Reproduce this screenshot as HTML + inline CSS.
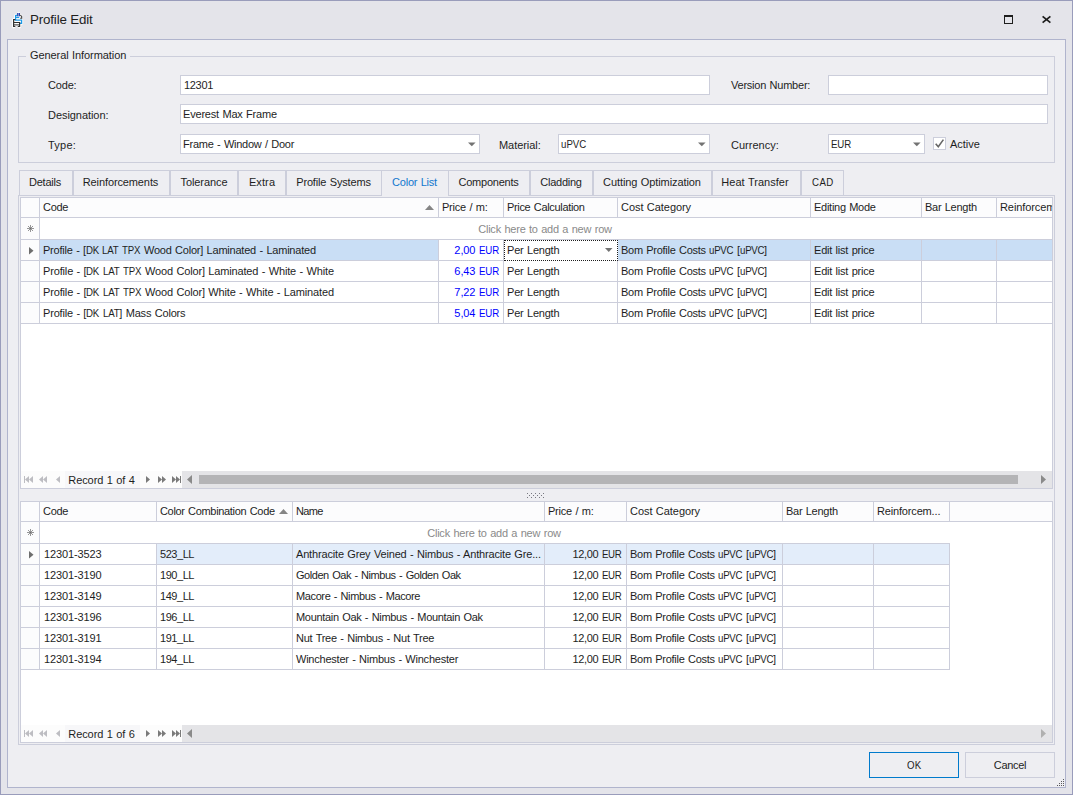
<!DOCTYPE html><html><head><meta charset="utf-8"><title>Profile Edit</title><style>
*{box-sizing:border-box;margin:0;padding:0}
html,body{width:1073px;height:795px;overflow:hidden}
body{background:#E4E4EA;font-family:"Liberation Sans",sans-serif;font-size:11px;color:#1E1E1E;position:relative;line-height:1}
.a{position:absolute;white-space:nowrap}
.k{display:inline-block;transform:scaleX(0.88);transform-origin:0 50%}
#win{left:0;top:0;width:1073px;height:795px;border:1px solid #999CBB}
#client{left:7px;top:39px;width:1059px;height:749px;background:#EEEEF2;border:1px solid #B0B4CD}
#title{left:30px;top:11px;font-size:13.33px;line-height:18px;letter-spacing:-0.15px}
.box{border:1px solid #CCCEDB}
.inp{border:1px solid #CCCEDB;background:#fff;height:20px;line-height:18px;padding-left:2px;overflow:hidden}
.lbl{height:20px;line-height:20px}
.tab{top:170px;height:26px;border:1px solid #CCCEDB;border-bottom:none;line-height:23px;text-align:center;background:#EEEEF2}
.tab.act{color:#1277CE;height:26px}
.grid{background:#fff;border:1px solid #CCCEDB;overflow:hidden}
.hc{top:0;height:20px;background:#FCFCFD;border-right:1px solid #CCCEDB;border-bottom:1px solid #CCCEDB;line-height:19px;padding-left:3px;overflow:hidden}
.c{height:21px;border-right:1px solid #CCCEDB;border-bottom:1px solid #CCCEDB;line-height:20px;padding-left:3px;overflow:hidden;background:#fff}
.r{text-align:right;padding-right:4px;padding-left:0}
.blue{color:#0000FF}
.ind{background:#FCFCFD}
.nav{background:#FCFCFC;height:17px}
.sb{background:#E4E4E7;height:17px}
.btn{top:752px;height:26px;line-height:24px;text-align:center;background:#EEEEF2}
</style></head><body>
<div id="win" class="a"></div>
<svg class="a" style="left:11px;top:11px" width="14" height="18" viewBox="11 11 14 18">
<g fill="none" stroke="#fff" stroke-width="3.2" stroke-linecap="round" stroke-linejoin="round" opacity="0.92">
<path d="M15.6 15.6V20.1H21.6V23.3H20.3"/><path d="M13.6 19.6V26.8M19.6 22.6V26.8M13.6 22.7H19.6M13.6 25H19.6"/><path d="M18.6 13.4V16.4M21 16V18"/>
</g>
<path d="M15.6 15V20.1H21.6V23.3H20M15.6 17.3H19.2M15.6 15.4H17" fill="none" stroke="#1E9BE9" stroke-width="1.25"/>
<path d="M17.75 13V16.3M19.35 13V16.3" stroke="#1733A6" stroke-width="1.15"/>
<path d="M20.3 15.1L21.7 16.5V18.3H20.2" fill="none" stroke="#3A3A3A" stroke-width="1.05"/>
<path d="M15.3 19.6H13.6V26.5H15.3M19.6 22V26.5H17.8" fill="none" stroke="#333" stroke-width="1.2"/><path d="M13.6 22.5H19.6M13.6 24.9H19.6" fill="none" stroke="#2E2E2E" stroke-width="1"/>
</svg>
<div id="title" class="a">Profile Edit</div>
<div class="a" style="left:1004px;top:15px;width:9px;height:9px;border:1px solid #1E1E1E;border-top-width:2px"></div>
<svg class="a" style="left:1041px;top:15px" width="11" height="9" viewBox="0 0 11 9"><path d="M1.6 1.3L9.4 7.7M9.4 1.3L1.6 7.7" stroke="#1E1E1E" stroke-width="1.7" fill="none"/></svg>
<div id="client" class="a"></div>
<div class="a box" style="left:18px;top:56px;width:1037px;height:107px"></div>
<div class="a" style="left:26px;top:47px;height:16px;line-height:16px;padding:0 4px;background:#EEEEF2"><span style="letter-spacing:-0.075px;word-spacing:0.475px">General Information</span></div>
<div class="a lbl" style="left:48px;top:75px"><span style="letter-spacing:-0.169px">Code:</span></div>
<div class="a inp" style="left:180px;top:75px;width:530px;padding-left:3px"><span style="letter-spacing:-0.310px">12301</span></div>
<div class="a lbl" style="left:731px;top:75px"><span style="letter-spacing:-0.225px;word-spacing:0.625px">Version Number:</span></div>
<div class="a inp" style="left:828px;top:75px;width:220px;padding-left:2px"></div>
<div class="a lbl" style="left:48px;top:105px"><span style="letter-spacing:-0.057px">Designation:</span></div>
<div class="a inp" style="left:180px;top:104px;width:868px;padding-left:2px"><span style="letter-spacing:-0.191px;word-spacing:0.591px">Everest Max Frame</span></div>
<div class="a lbl" style="left:48px;top:135px"><span style="letter-spacing:0.243px">Type:</span></div>
<div class="a inp" style="left:180px;top:134px;width:300px;padding-left:2px"><span style="letter-spacing:-0.243px;word-spacing:0.643px">Frame - Window / Door</span></div>
<svg class="a" style="left:468px;top:142px" width="8" height="5" viewBox="0 0 8 5"><path d="M0 0.5H7.6L3.8 4.3Z" fill="#737373"/></svg>
<div class="a lbl" style="left:499px;top:135px"><span style="letter-spacing:-0.057px">Material:</span></div>
<div class="a inp" style="left:558px;top:134px;width:152px;padding-left:2px"><span style="letter-spacing:-0.004px"><span class="k" style="margin-right:-3.45px">uPVC</span></span></div>
<svg class="a" style="left:698px;top:142px" width="8" height="5" viewBox="0 0 8 5"><path d="M0 0.5H7.6L3.8 4.3Z" fill="#737373"/></svg>
<div class="a lbl" style="left:731px;top:135px"><span style="letter-spacing:0.001px">Currency:</span></div>
<div class="a inp" style="left:828px;top:134px;width:97px;padding-left:2px"><span style="letter-spacing:-0.181px"><span class="k" style="margin-right:-2.79px">EUR</span></span></div>
<svg class="a" style="left:913px;top:142px" width="8" height="5" viewBox="0 0 8 5"><path d="M0 0.5H7.6L3.8 4.3Z" fill="#737373"/></svg>
<div class="a" style="left:933px;top:137px;width:13px;height:13px;border:1px solid #CCCEDB;background:#fff"></div>
<svg class="a" style="left:933px;top:137px" width="13" height="13" viewBox="0 0 13 13"><path d="M2.7 6.7L5.3 9.7L10.4 2.6" fill="none" stroke="#666" stroke-width="1.6"/></svg>
<div class="a lbl" style="left:950px;top:134px"><span style="letter-spacing:-0.031px">Active</span></div>
<div class="a box" style="left:18px;top:195px;width:1037px;height:550px"></div>
<div class="a tab" style="left:19px;width:54px;padding-right:2px"><span style="letter-spacing:-0.219px">Details</span></div>
<div class="a tab" style="left:73px;width:97px;padding-right:2px"><span style="letter-spacing:-0.115px">Reinforcements</span></div>
<div class="a tab" style="left:170px;width:68px"><span style="letter-spacing:-0.071px">Tolerance</span></div>
<div class="a tab" style="left:238px;width:48px"><span style="letter-spacing:0.114px">Extra</span></div>
<div class="a tab" style="left:286px;width:96px;padding-right:1px"><span style="letter-spacing:-0.165px;word-spacing:0.565px">Profile Systems</span></div>
<div class="a tab act" style="left:382px;width:66px;border-left:none;border-right:none;padding-right:1px"><span style="letter-spacing:-0.220px;word-spacing:0.620px">Color List</span></div>
<div class="a tab" style="left:448px;width:82px;padding-right:1px"><span style="letter-spacing:-0.229px">Components</span></div>
<div class="a tab" style="left:530px;width:63px;padding-right:1px"><span style="letter-spacing:-0.270px">Cladding</span></div>
<div class="a tab" style="left:593px;width:119px;padding-right:1px"><span style="letter-spacing:-0.089px;word-spacing:0.489px">Cutting Optimization</span></div>
<div class="a tab" style="left:712px;width:89px;padding-right:3px"><span style="letter-spacing:0.031px;word-spacing:0.369px">Heat Transfer</span></div>
<div class="a tab" style="left:801px;width:43px"><span style="letter-spacing:0.499px"><span class="k" style="margin-right:-2.79px">CAD</span></span></div>
<div class="a" style="left:19px;top:195px;width:363px;height:1px;background:#CCCEDB"></div>
<div class="a" style="left:382px;top:195px;width:66px;height:1px;background:#EEEEF2"></div>
<div class="a" style="left:448px;top:195px;width:396px;height:1px;background:#CCCEDB"></div>
<div class="a grid" style="left:20px;top:197px;width:1033px;height:292px">
<div class="a hc" style="left:0px;width:19px"></div>
<div class="a hc" style="left:19px;width:399px"><span style="letter-spacing:-0.285px">Code</span></div>
<div class="a hc" style="left:418px;width:65px"><span style="letter-spacing:-0.220px;word-spacing:0.620px">Price / m:</span></div>
<div class="a hc" style="left:483px;width:114px"><span style="letter-spacing:-0.332px;word-spacing:0.732px">Price Calculation</span></div>
<div class="a hc" style="left:597px;width:193px"><span style="letter-spacing:-0.053px;word-spacing:0.453px">Cost Category</span></div>
<div class="a hc" style="left:790px;width:111px"><span style="letter-spacing:-0.268px;word-spacing:0.668px">Editing Mode</span></div>
<div class="a hc" style="left:901px;width:75px"><span style="letter-spacing:-0.274px;word-spacing:0.674px">Bar Length</span></div>
<div class="a hc" style="left:976px;width:64px"><span style="letter-spacing:-0.092px">Reinforcement</span></div>
<svg class="a" style="left:404px;top:7px" width="9" height="5" viewBox="0 0 9 5"><path d="M0 5L4.5 0L9 5Z" fill="#858585"/></svg>
<div class="a c ind" style="left:0;top:20px;width:19px;height:22px;padding:0"></div>
<svg class="a" style="left:6px;top:27px" width="7" height="7" viewBox="0 0 7 7"><path d="M3.5 0V7M0 3.5H7M1 1L6 6M6 1L1 6" stroke="#6A6A6A" stroke-width="0.7" fill="none"/></svg>
<div class="a" style="left:19px;top:20px;width:1012px;height:22px;line-height:23px;text-align:center;padding-right:2px;color:#8A8A8A;border-bottom:1px solid #CCCEDB"><span style="letter-spacing:-0.216px;word-spacing:0.616px">Click here to add a new row</span></div>
<div class="a c ind" style="left:0;top:42px;width:19px"></div>
<svg class="a" style="left:8px;top:49px" width="4.5" height="7.5" viewBox="0 0 4.5 7.5"><path d="M0 0L4.5 3.75L0 7.5Z" fill="#6E6E6E"/></svg>
<div class="a c" style="left:19px;top:42px;width:399px;background:#C9DEF5"><span style="letter-spacing:-0.214px;word-spacing:0.614px">Profile - [<span class="k" style="margin-right:-1.83px">DK</span> <span class="k" style="margin-right:-2.32px">LAT</span> <span class="k" style="margin-right:-2.57px">TPX</span> Wood Color] Laminated - Laminated</span></div>
<div class="a c r blue" style="left:418px;top:42px;width:65px"><span style="letter-spacing:-0.096px;word-spacing:0.496px">2,00 <span class="k" style="margin-right:-2.79px">EUR</span></span></div>
<div class="a c" style="left:483px;top:42px;width:114px;border:1px dotted #1E1E1E;line-height:18px;padding-left:2px"><span style="letter-spacing:-0.203px;word-spacing:0.603px">Per Length</span></div>
<svg class="a" style="left:584px;top:50px" width="7.5" height="4" viewBox="0 0 7.5 4"><path d="M0 0L7.5 0L3.75 4Z" fill="#737373"/></svg>
<div class="a c" style="left:597px;top:42px;width:193px;background:#C9DEF5"><span style="letter-spacing:-0.270px;word-spacing:0.670px">Bom Profile Costs <span class="k" style="margin-right:-3.45px">uPVC</span> [<span class="k" style="margin-right:-3.45px">uPVC</span>]</span></div>
<div class="a c" style="left:790px;top:42px;width:111px;background:#C9DEF5"><span style="letter-spacing:-0.205px;word-spacing:0.605px">Edit list price</span></div>
<div class="a c" style="left:901px;top:42px;width:75px;background:#C9DEF5"></div>
<div class="a c" style="left:976px;top:42px;width:60px;border-right:none;background:#C9DEF5"></div>
<div class="a c ind" style="left:0;top:63px;width:19px"></div>
<div class="a c" style="left:19px;top:63px;width:399px"><span style="letter-spacing:-0.151px;word-spacing:0.551px">Profile - [<span class="k" style="margin-right:-1.83px">DK</span> <span class="k" style="margin-right:-2.32px">LAT</span> <span class="k" style="margin-right:-2.57px">TPX</span> Wood Color] Laminated - White - White</span></div>
<div class="a c r blue" style="left:418px;top:63px;width:65px"><span style="letter-spacing:-0.096px;word-spacing:0.496px">6,43 <span class="k" style="margin-right:-2.79px">EUR</span></span></div>
<div class="a c" style="left:483px;top:63px;width:114px"><span style="letter-spacing:-0.203px;word-spacing:0.603px">Per Length</span></div>
<div class="a c" style="left:597px;top:63px;width:193px"><span style="letter-spacing:-0.270px;word-spacing:0.670px">Bom Profile Costs <span class="k" style="margin-right:-3.45px">uPVC</span> [<span class="k" style="margin-right:-3.45px">uPVC</span>]</span></div>
<div class="a c" style="left:790px;top:63px;width:111px"><span style="letter-spacing:-0.205px;word-spacing:0.605px">Edit list price</span></div>
<div class="a c" style="left:901px;top:63px;width:75px"></div>
<div class="a c" style="left:976px;top:63px;width:60px;border-right:none"></div>
<div class="a c ind" style="left:0;top:84px;width:19px"></div>
<div class="a c" style="left:19px;top:84px;width:399px"><span style="letter-spacing:-0.151px;word-spacing:0.551px">Profile - [<span class="k" style="margin-right:-1.83px">DK</span> <span class="k" style="margin-right:-2.32px">LAT</span> <span class="k" style="margin-right:-2.57px">TPX</span> Wood Color] White - White - Laminated</span></div>
<div class="a c r blue" style="left:418px;top:84px;width:65px"><span style="letter-spacing:-0.096px;word-spacing:0.496px">7,22 <span class="k" style="margin-right:-2.79px">EUR</span></span></div>
<div class="a c" style="left:483px;top:84px;width:114px"><span style="letter-spacing:-0.203px;word-spacing:0.603px">Per Length</span></div>
<div class="a c" style="left:597px;top:84px;width:193px"><span style="letter-spacing:-0.270px;word-spacing:0.670px">Bom Profile Costs <span class="k" style="margin-right:-3.45px">uPVC</span> [<span class="k" style="margin-right:-3.45px">uPVC</span>]</span></div>
<div class="a c" style="left:790px;top:84px;width:111px"><span style="letter-spacing:-0.205px;word-spacing:0.605px">Edit list price</span></div>
<div class="a c" style="left:901px;top:84px;width:75px"></div>
<div class="a c" style="left:976px;top:84px;width:60px;border-right:none"></div>
<div class="a c ind" style="left:0;top:105px;width:19px"></div>
<div class="a c" style="left:19px;top:105px;width:399px"><span style="letter-spacing:-0.177px;word-spacing:0.577px">Profile - [<span class="k" style="margin-right:-1.83px">DK</span> <span class="k" style="margin-right:-2.32px">LAT</span>] Mass Colors</span></div>
<div class="a c r blue" style="left:418px;top:105px;width:65px"><span style="letter-spacing:-0.096px;word-spacing:0.496px">5,04 <span class="k" style="margin-right:-2.79px">EUR</span></span></div>
<div class="a c" style="left:483px;top:105px;width:114px"><span style="letter-spacing:-0.203px;word-spacing:0.603px">Per Length</span></div>
<div class="a c" style="left:597px;top:105px;width:193px"><span style="letter-spacing:-0.270px;word-spacing:0.670px">Bom Profile Costs <span class="k" style="margin-right:-3.45px">uPVC</span> [<span class="k" style="margin-right:-3.45px">uPVC</span>]</span></div>
<div class="a c" style="left:790px;top:105px;width:111px"><span style="letter-spacing:-0.205px;word-spacing:0.605px">Edit list price</span></div>
<div class="a c" style="left:901px;top:105px;width:75px"></div>
<div class="a c" style="left:976px;top:105px;width:60px;border-right:none"></div>
</div>
<div class="a nav" style="left:21px;top:471px;width:161px"></div>
<div class="a" style="left:65px;top:471px;width:75px;height:17px;line-height:19px;text-align:center;padding-right:2px;background:#F7F7F9"><span style="letter-spacing:-0.079px;word-spacing:0.479px">Record 1 of 4</span></div>
<div class="a" style="left:24px;top:476px;width:1px;height:7px;background:#BDBDC2"></div>
<svg class="a" style="left:25px;top:476px" width="4" height="7" viewBox="0 0 4 7"><path d="M4 0L0 3.5L4 7Z" fill="#BDBDC2"/></svg>
<svg class="a" style="left:29px;top:476px" width="4" height="7" viewBox="0 0 4 7"><path d="M4 0L0 3.5L4 7Z" fill="#BDBDC2"/></svg>
<svg class="a" style="left:39px;top:476px" width="4" height="7" viewBox="0 0 4 7"><path d="M4 0L0 3.5L4 7Z" fill="#BDBDC2"/></svg>
<svg class="a" style="left:43px;top:476px" width="4" height="7" viewBox="0 0 4 7"><path d="M4 0L0 3.5L4 7Z" fill="#BDBDC2"/></svg>
<svg class="a" style="left:56px;top:476px" width="4" height="7" viewBox="0 0 4 7"><path d="M4 0L0 3.5L4 7Z" fill="#BDBDC2"/></svg>
<svg class="a" style="left:146px;top:476px" width="4" height="7" viewBox="0 0 4 7"><path d="M0 0L4 3.5L0 7Z" fill="#7A7A7A"/></svg>
<svg class="a" style="left:158px;top:476px" width="4" height="7" viewBox="0 0 4 7"><path d="M0 0L4 3.5L0 7Z" fill="#7A7A7A"/></svg>
<svg class="a" style="left:162px;top:476px" width="4" height="7" viewBox="0 0 4 7"><path d="M0 0L4 3.5L0 7Z" fill="#7A7A7A"/></svg>
<svg class="a" style="left:172px;top:476px" width="4" height="7" viewBox="0 0 4 7"><path d="M0 0L4 3.5L0 7Z" fill="#7A7A7A"/></svg>
<svg class="a" style="left:176px;top:476px" width="4" height="7" viewBox="0 0 4 7"><path d="M0 0L4 3.5L0 7Z" fill="#7A7A7A"/></svg>
<div class="a" style="left:180px;top:476px;width:1px;height:7px;background:#7A7A7A"></div>
<div class="a sb" style="left:182px;top:471px;width:870px"></div>
<svg class="a" style="left:187px;top:475px" width="5" height="9" viewBox="0 0 5 9"><path d="M5 0L0 4.5L5 9Z" fill="#8A8A8A"/></svg>
<svg class="a" style="left:1041px;top:475px" width="5" height="9" viewBox="0 0 5 9"><path d="M0 0L5 4.5L0 9Z" fill="#8A8A8A"/></svg>
<div class="a" style="left:199px;top:475px;width:819px;height:9px;background:#B4B4B6"></div>
<svg class="a" style="left:526px;top:493px" width="19" height="5" viewBox="0 0 19 5" fill="#777780"><rect x="1" y="0" width="1" height="1"/><rect x="5" y="0" width="1" height="1"/><rect x="9" y="0" width="1" height="1"/><rect x="13" y="0" width="1" height="1"/><rect x="17" y="0" width="1" height="1"/><rect x="3" y="2" width="1" height="1"/><rect x="7" y="2" width="1" height="1"/><rect x="11" y="2" width="1" height="1"/><rect x="15" y="2" width="1" height="1"/><rect x="1" y="4" width="1" height="1"/><rect x="5" y="4" width="1" height="1"/><rect x="9" y="4" width="1" height="1"/><rect x="13" y="4" width="1" height="1"/><rect x="17" y="4" width="1" height="1"/></svg>
<div class="a grid" style="left:20px;top:501px;width:1033px;height:242px">
<div class="a hc" style="left:0px;width:19px"></div>
<div class="a hc" style="left:19px;width:117px"><span style="letter-spacing:-0.285px">Code</span></div>
<div class="a hc" style="left:136px;width:136px"><span style="letter-spacing:-0.326px;word-spacing:0.726px">Color Combination Code</span></div>
<div class="a hc" style="left:272px;width:252px"><span style="letter-spacing:-0.641px">Name</span></div>
<div class="a hc" style="left:524px;width:82px"><span style="letter-spacing:-0.220px;word-spacing:0.620px">Price / m:</span></div>
<div class="a hc" style="left:606px;width:156px"><span style="letter-spacing:-0.053px;word-spacing:0.453px">Cost Category</span></div>
<div class="a hc" style="left:762px;width:91px"><span style="letter-spacing:-0.274px;word-spacing:0.674px">Bar Length</span></div>
<div class="a hc" style="left:853px;width:76px"><span style="letter-spacing:-0.162px">Reinforcem...</span></div>
<div class="a hc" style="left:929px;width:102px;border-right:none"></div>
<svg class="a" style="left:258px;top:7px" width="9" height="5" viewBox="0 0 9 5"><path d="M0 5L4.5 0L9 5Z" fill="#858585"/></svg>
<div class="a c ind" style="left:0;top:20px;width:19px;height:22px;padding:0"></div>
<svg class="a" style="left:6px;top:27px" width="7" height="7" viewBox="0 0 7 7"><path d="M3.5 0V7M0 3.5H7M1 1L6 6M6 1L1 6" stroke="#6A6A6A" stroke-width="0.7" fill="none"/></svg>
<div class="a" style="left:19px;top:20px;width:910px;height:22px;line-height:23px;text-align:center;padding-right:2px;color:#8A8A8A"><span style="letter-spacing:-0.216px;word-spacing:0.616px">Click here to add a new row</span></div>
<div class="a" style="left:19px;top:41px;width:910px;height:1px;background:#CCCEDB"></div>
<div class="a c ind" style="left:0;top:42px;width:19px"></div>
<svg class="a" style="left:8px;top:49px" width="4.5" height="7.5" viewBox="0 0 4.5 7.5"><path d="M0 0L4.5 3.75L0 7.5Z" fill="#6E6E6E"/></svg>
<div class="a c" style="left:19px;top:42px;width:117px;padding-left:4px"><span style="letter-spacing:-0.130px">12301-3523</span></div>
<div class="a c" style="left:136px;top:42px;width:136px;background:#E3EDFA"><span style="letter-spacing:-0.458px">523_LL</span></div>
<div class="a c" style="left:272px;top:42px;width:252px;background:#E3EDFA"><span style="letter-spacing:-0.169px;word-spacing:0.569px">Anthracite Grey Veined - Nimbus - Anthracite Gre...</span></div>
<div class="a c r" style="left:524px;top:42px;width:82px;padding-right:5px;background:#E3EDFA"><span style="letter-spacing:-0.380px;word-spacing:0.780px">12,00 <span class="k" style="margin-right:-2.79px">EUR</span></span></div>
<div class="a c" style="left:606px;top:42px;width:156px;background:#E3EDFA"><span style="letter-spacing:-0.270px;word-spacing:0.670px">Bom Profile Costs <span class="k" style="margin-right:-3.45px">uPVC</span> [<span class="k" style="margin-right:-3.45px">uPVC</span>]</span></div>
<div class="a c" style="left:762px;top:42px;width:91px;background:#E3EDFA"></div>
<div class="a c" style="left:853px;top:42px;width:76px;background:#E3EDFA"></div>
<div class="a c ind" style="left:0;top:63px;width:19px"></div>
<div class="a c" style="left:19px;top:63px;width:117px;padding-left:4px"><span style="letter-spacing:-0.130px">12301-3190</span></div>
<div class="a c" style="left:136px;top:63px;width:136px"><span style="letter-spacing:-0.458px">190_LL</span></div>
<div class="a c" style="left:272px;top:63px;width:252px"><span style="letter-spacing:-0.461px;word-spacing:0.861px">Golden Oak - Nimbus - Golden Oak</span></div>
<div class="a c r" style="left:524px;top:63px;width:82px;padding-right:5px"><span style="letter-spacing:-0.380px;word-spacing:0.780px">12,00 <span class="k" style="margin-right:-2.79px">EUR</span></span></div>
<div class="a c" style="left:606px;top:63px;width:156px"><span style="letter-spacing:-0.270px;word-spacing:0.670px">Bom Profile Costs <span class="k" style="margin-right:-3.45px">uPVC</span> [<span class="k" style="margin-right:-3.45px">uPVC</span>]</span></div>
<div class="a c" style="left:762px;top:63px;width:91px"></div>
<div class="a c" style="left:853px;top:63px;width:76px"></div>
<div class="a c ind" style="left:0;top:84px;width:19px"></div>
<div class="a c" style="left:19px;top:84px;width:117px;padding-left:4px"><span style="letter-spacing:-0.130px">12301-3149</span></div>
<div class="a c" style="left:136px;top:84px;width:136px"><span style="letter-spacing:-0.458px">149_LL</span></div>
<div class="a c" style="left:272px;top:84px;width:252px"><span style="letter-spacing:-0.385px;word-spacing:0.785px">Macore - Nimbus - Macore</span></div>
<div class="a c r" style="left:524px;top:84px;width:82px;padding-right:5px"><span style="letter-spacing:-0.380px;word-spacing:0.780px">12,00 <span class="k" style="margin-right:-2.79px">EUR</span></span></div>
<div class="a c" style="left:606px;top:84px;width:156px"><span style="letter-spacing:-0.270px;word-spacing:0.670px">Bom Profile Costs <span class="k" style="margin-right:-3.45px">uPVC</span> [<span class="k" style="margin-right:-3.45px">uPVC</span>]</span></div>
<div class="a c" style="left:762px;top:84px;width:91px"></div>
<div class="a c" style="left:853px;top:84px;width:76px"></div>
<div class="a c ind" style="left:0;top:105px;width:19px"></div>
<div class="a c" style="left:19px;top:105px;width:117px;padding-left:4px"><span style="letter-spacing:-0.130px">12301-3196</span></div>
<div class="a c" style="left:136px;top:105px;width:136px"><span style="letter-spacing:-0.458px">196_LL</span></div>
<div class="a c" style="left:272px;top:105px;width:252px"><span style="letter-spacing:-0.316px;word-spacing:0.716px">Mountain Oak - Nimbus - Mountain Oak</span></div>
<div class="a c r" style="left:524px;top:105px;width:82px;padding-right:5px"><span style="letter-spacing:-0.380px;word-spacing:0.780px">12,00 <span class="k" style="margin-right:-2.79px">EUR</span></span></div>
<div class="a c" style="left:606px;top:105px;width:156px"><span style="letter-spacing:-0.270px;word-spacing:0.670px">Bom Profile Costs <span class="k" style="margin-right:-3.45px">uPVC</span> [<span class="k" style="margin-right:-3.45px">uPVC</span>]</span></div>
<div class="a c" style="left:762px;top:105px;width:91px"></div>
<div class="a c" style="left:853px;top:105px;width:76px"></div>
<div class="a c ind" style="left:0;top:126px;width:19px"></div>
<div class="a c" style="left:19px;top:126px;width:117px;padding-left:4px"><span style="letter-spacing:-0.130px">12301-3191</span></div>
<div class="a c" style="left:136px;top:126px;width:136px"><span style="letter-spacing:-0.458px">191_LL</span></div>
<div class="a c" style="left:272px;top:126px;width:252px"><span style="letter-spacing:-0.247px;word-spacing:0.647px">Nut Tree - Nimbus - Nut Tree</span></div>
<div class="a c r" style="left:524px;top:126px;width:82px;padding-right:5px"><span style="letter-spacing:-0.380px;word-spacing:0.780px">12,00 <span class="k" style="margin-right:-2.79px">EUR</span></span></div>
<div class="a c" style="left:606px;top:126px;width:156px"><span style="letter-spacing:-0.270px;word-spacing:0.670px">Bom Profile Costs <span class="k" style="margin-right:-3.45px">uPVC</span> [<span class="k" style="margin-right:-3.45px">uPVC</span>]</span></div>
<div class="a c" style="left:762px;top:126px;width:91px"></div>
<div class="a c" style="left:853px;top:126px;width:76px"></div>
<div class="a c ind" style="left:0;top:147px;width:19px"></div>
<div class="a c" style="left:19px;top:147px;width:117px;padding-left:4px"><span style="letter-spacing:-0.130px">12301-3194</span></div>
<div class="a c" style="left:136px;top:147px;width:136px"><span style="letter-spacing:-0.458px">194_LL</span></div>
<div class="a c" style="left:272px;top:147px;width:252px"><span style="letter-spacing:-0.228px;word-spacing:0.628px">Winchester - Nimbus - Winchester</span></div>
<div class="a c r" style="left:524px;top:147px;width:82px;padding-right:5px"><span style="letter-spacing:-0.380px;word-spacing:0.780px">12,00 <span class="k" style="margin-right:-2.79px">EUR</span></span></div>
<div class="a c" style="left:606px;top:147px;width:156px"><span style="letter-spacing:-0.270px;word-spacing:0.670px">Bom Profile Costs <span class="k" style="margin-right:-3.45px">uPVC</span> [<span class="k" style="margin-right:-3.45px">uPVC</span>]</span></div>
<div class="a c" style="left:762px;top:147px;width:91px"></div>
<div class="a c" style="left:853px;top:147px;width:76px"></div>
</div>
<div class="a nav" style="left:21px;top:725px;width:161px"></div>
<div class="a" style="left:65px;top:725px;width:75px;height:17px;line-height:19px;text-align:center;padding-right:2px;background:#F7F7F9"><span style="letter-spacing:-0.079px;word-spacing:0.479px">Record 1 of 6</span></div>
<div class="a" style="left:24px;top:730px;width:1px;height:7px;background:#BDBDC2"></div>
<svg class="a" style="left:25px;top:730px" width="4" height="7" viewBox="0 0 4 7"><path d="M4 0L0 3.5L4 7Z" fill="#BDBDC2"/></svg>
<svg class="a" style="left:29px;top:730px" width="4" height="7" viewBox="0 0 4 7"><path d="M4 0L0 3.5L4 7Z" fill="#BDBDC2"/></svg>
<svg class="a" style="left:39px;top:730px" width="4" height="7" viewBox="0 0 4 7"><path d="M4 0L0 3.5L4 7Z" fill="#BDBDC2"/></svg>
<svg class="a" style="left:43px;top:730px" width="4" height="7" viewBox="0 0 4 7"><path d="M4 0L0 3.5L4 7Z" fill="#BDBDC2"/></svg>
<svg class="a" style="left:56px;top:730px" width="4" height="7" viewBox="0 0 4 7"><path d="M4 0L0 3.5L4 7Z" fill="#BDBDC2"/></svg>
<svg class="a" style="left:146px;top:730px" width="4" height="7" viewBox="0 0 4 7"><path d="M0 0L4 3.5L0 7Z" fill="#7A7A7A"/></svg>
<svg class="a" style="left:158px;top:730px" width="4" height="7" viewBox="0 0 4 7"><path d="M0 0L4 3.5L0 7Z" fill="#7A7A7A"/></svg>
<svg class="a" style="left:162px;top:730px" width="4" height="7" viewBox="0 0 4 7"><path d="M0 0L4 3.5L0 7Z" fill="#7A7A7A"/></svg>
<svg class="a" style="left:172px;top:730px" width="4" height="7" viewBox="0 0 4 7"><path d="M0 0L4 3.5L0 7Z" fill="#7A7A7A"/></svg>
<svg class="a" style="left:176px;top:730px" width="4" height="7" viewBox="0 0 4 7"><path d="M0 0L4 3.5L0 7Z" fill="#7A7A7A"/></svg>
<div class="a" style="left:180px;top:730px;width:1px;height:7px;background:#7A7A7A"></div>
<div class="a sb" style="left:182px;top:725px;width:870px"></div>
<svg class="a" style="left:187px;top:729px" width="5" height="9" viewBox="0 0 5 9"><path d="M5 0L0 4.5L5 9Z" fill="#8A8A8A"/></svg>
<svg class="a" style="left:1041px;top:729px" width="5" height="9" viewBox="0 0 5 9"><path d="M0 0L5 4.5L0 9Z" fill="#B0B0B0"/></svg>
<div class="a btn" style="left:869px;width:90px;border:1px solid #007ACC"><span style="letter-spacing:0.333px"><span class="k" style="margin-right:-1.91px">OK</span></span></div>
<div class="a btn" style="left:965px;width:90px;border:1px solid #CCCEDB"><span style="letter-spacing:-0.300px">Cancel</span></div>
<svg class="a" style="left:1057px;top:779px" width="8" height="8" viewBox="0 0 8 8" fill="#5A5A5E"><rect x="6" y="0" width="1" height="1"/><rect x="6" y="2" width="1" height="1"/><rect x="4" y="2" width="1" height="1"/><rect x="6" y="4" width="1" height="1"/><rect x="4" y="4" width="1" height="1"/><rect x="2" y="4" width="1" height="1"/><rect x="6" y="6" width="1" height="1"/><rect x="4" y="6" width="1" height="1"/><rect x="2" y="6" width="1" height="1"/><rect x="0" y="6" width="1" height="1"/></svg>
</body></html>
